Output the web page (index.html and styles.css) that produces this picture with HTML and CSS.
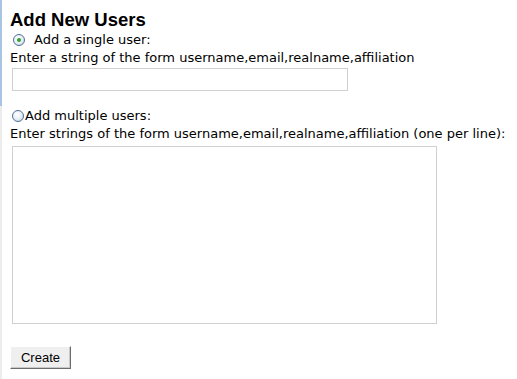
FILE: index.html
```html
<!DOCTYPE html>
<html>
<head>
<meta charset="utf-8">
<link rel="stylesheet" href="styles.css">
</head>
<body>
<div class="page">
  <div class="edge"><div class="edge-top"></div><div class="edge-bottom"></div></div>
  <form class="content">
    <h2 class="title">Add New Users</h2>
    <label class="opt opt-single"><span class="radio checked"></span>Add a single user:</label>
    <div class="hint">Enter a string of the form username,email,realname,affiliation</div>
    <div class="field-single"></div>
    <label class="opt opt-multi"><span class="radio"></span>Add multiple users:</label>
    <div class="hint">Enter strings of the form username,email,realname,affiliation (one per line):</div>
    <div class="field-multi"></div>
    <div class="actions"><button type="button" class="btn">Create</button></div>
  </form>
</div>
</body>
</html>
```

FILE: styles.css
```css
html, body {
  margin: 0;
  padding: 0;
  background: #fff;
}
.page {
  display: flex;
  width: 517px;
  height: 379px;
  overflow: hidden;
}
.edge {
  width: 2px;
  display: flex;
  flex-direction: column;
  flex: none;
}
.edge-top {
  height: 106px;
  background: #a9c3e2;
}
.edge-bottom {
  flex: 1;
  background: #ececec;
}
.content {
  margin: 0;
  padding: 9px 0 0 8px;
  display: flex;
  flex-direction: column;
  font-family: "DejaVu Sans", Verdana, sans-serif;
  font-size: 13px;
  color: #000;
}
.title {
  margin: 0;
  font-family: "Liberation Sans", Arial, sans-serif;
  font-weight: bold;
  font-size: 18.5px;
  line-height: 22px;
}
.opt {
  display: flex;
  align-items: center;
  height: 18px;
  line-height: 18px;
}
.opt-single .radio {
  margin: 0 9px 0 3px;
}
.opt-multi {
  margin-top: 16px;
}
.opt-multi .radio {
  margin: 0 1px 0 2px;
}
.radio {
  width: 12px;
  height: 12px;
  border-radius: 50%;
  border: 1px solid #4f6f96;
  background: radial-gradient(circle at 40% 35%, #ffffff 0%, #e6edf5 55%, #b9c9dd 100%);
  box-sizing: border-box;
  position: relative;
  flex: none;
}
.radio.checked::after {
  content: "";
  position: absolute;
  left: 3px;
  top: 3px;
  width: 4px;
  height: 4px;
  border-radius: 50%;
  background: #2fa52f;
}
.hint {
  height: 18px;
  line-height: 18px;
}
.field-single {
  margin: 1px 0 0 2px;
  width: 336px;
  height: 23px;
  border: 1px solid #d0d0d0;
  box-sizing: border-box;
}
.field-multi {
  margin: 3px 0 0 2px;
  width: 425px;
  height: 178px;
  border: 1px solid #d0d0d0;
  box-sizing: border-box;
}
.actions {
  margin-top: 22px;
}
.btn {
  width: 61px;
  height: 23px;
  padding: 0;
  font-family: "Liberation Sans", Arial, sans-serif;
  font-size: 13px;
  color: #000;
  background: #efefef;
  border: 1px solid;
  border-color: #ffffff #6d6d6d #6d6d6d #ffffff;
  box-shadow: inset -1px -1px 0 #c8c8c8;
}
```
